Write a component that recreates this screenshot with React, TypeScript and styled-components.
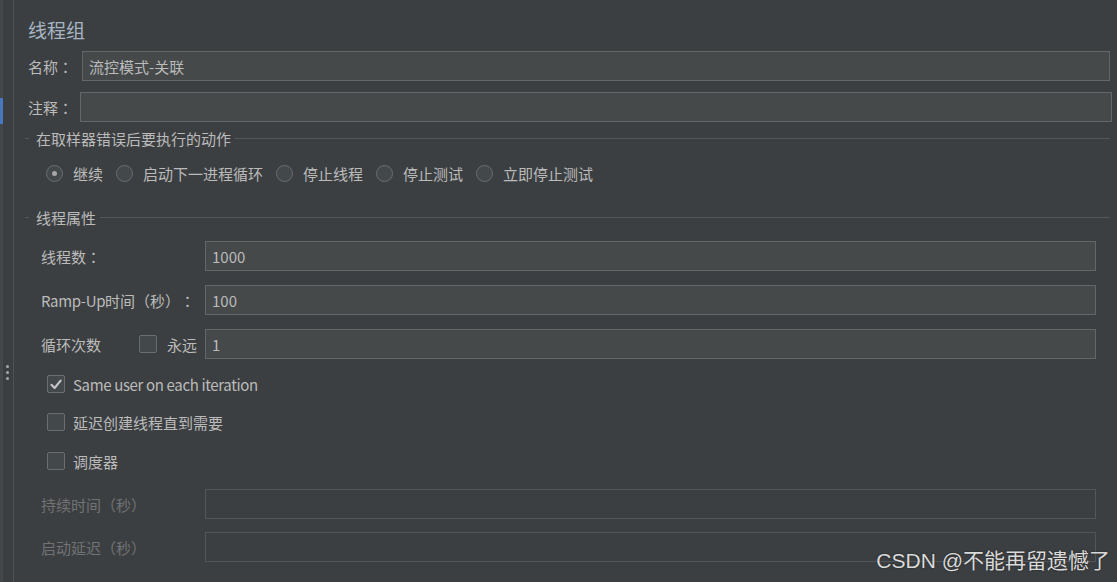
import React from "react"
import styled, { createGlobalStyle } from "styled-components"

const Colors = {
  page: "#3c3f41",
  line: "#555759",
  text: "#bbbbbb",
  title: "#a7b5c4",
  muted: "#707274",
  field: "#45494a",
  fieldBorder: "#646667",
  fieldBorderOff: "#535557",
  control: "#43484a",
  controlBorder: "#6b6e70",
}

const font = `"Noto Sans CJK SC", "Noto Sans", sans-serif`

const GlobalStyle = createGlobalStyle`
  html, body {
    margin: 0;
    padding: 0;
    background: ${Colors.page};
    overflow: hidden;
  }
  * {
    box-sizing: border-box;
  }
`

// full-width colon drawn centred in its cell, like the Swing font does
const Colon = () => <CentredColon>：</CentredColon>

export default function App() {
  return (
    <>
      <GlobalStyle />
      <Page>
        <Splitter>
          <Edge>
            <Marker />
          </Edge>
          <Grip>
            <Dot />
            <Dot />
            <Dot />
          </Grip>
        </Splitter>

        <Content>
          <Title>线程组</Title>

          <TopRow $mt={7} $right={7}>
            <TopLabel $width={54}>名称<Colon /></TopLabel>
            <Field>流控模式-关联</Field>
          </TopRow>

          <TopRow $mt={11} $right={5}>
            <TopLabel $width={52}>注释<Colon /></TopLabel>
            <Field />
          </TopRow>

          <Legend $mt={7}>在取样器错误后要执行的动作</Legend>

          <RadioRow>
            {["继续", "启动下一进程循环", "停止线程", "停止测试", "立即停止测试"].map((label, i) => (
              <Option key={label}>
                <Radio $checked={i === 0} />
                {label}
              </Option>
            ))}
          </RadioRow>

          <Legend $mt={24}>线程属性</Legend>

          <PropRow $mt={15}>
            <PropLabel>线程数<Colon /></PropLabel>
            <Field>1000</Field>
          </PropRow>

          <PropRow $mt={14}>
            <PropLabel><Latin>Ramp-Up</Latin>时间（秒）<Colon /></PropLabel>
            <Field>100</Field>
          </PropRow>

          <PropRow $mt={14}>
            <PropLabel>
              <LoopText>循环次数</LoopText>
              <Option>
                <Checkbox />
                永远
              </Option>
            </PropLabel>
            <Field>1</Field>
          </PropRow>

          <CheckRow $mt={15}>
            <Checkbox $checked>
              <CheckMark />
            </Checkbox>
            <Latin>Same user on each iteration</Latin>
          </CheckRow>

          <CheckRow $mt={18}>
            <Checkbox />
            延迟创建线程直到需要
          </CheckRow>

          <CheckRow $mt={19}>
            <Checkbox />
            调度器
          </CheckRow>

          <PropRow $mt={18}>
            <PropLabel $disabled>持续时间（秒）</PropLabel>
            <Field $disabled />
          </PropRow>

          <PropRow $mt={13}>
            <PropLabel $disabled>启动延迟（秒）</PropLabel>
            <Field $disabled />
          </PropRow>
        </Content>

        <Watermark>CSDN @不能再留遗憾了</Watermark>
      </Page>
    </>
  )
}

const CheckMark = () => (
  <svg width="12" height="11" viewBox="0 0 12 11">
    <path d="M1.5 5.8 L4.6 9 L10.6 1.6" fill="none" stroke="#c4c4c4" strokeWidth="2.2" strokeLinecap="round" strokeLinejoin="round" />
  </svg>
)

const Page = styled.div`
  position: relative;
  display: flex;
  width: 1117px;
  height: 582px;
  background: ${Colors.page};
  font-family: ${font};
  font-size: 15px;
  color: ${Colors.text};
`

const Splitter = styled.div`
  display: flex;
  flex: 0 0 14px;
  border-right: 1px solid #4e5153;
`

const Edge = styled.div`
  width: 3px;
  background: #45484a;
`

const Marker = styled.div`
  margin-top: 98px;
  height: 26px;
  background: #4877bd;
`

const Grip = styled.div`
  flex: 1;
  display: flex;
  flex-direction: column;
  align-items: center;
  gap: 3px;
  padding-top: 365px;
  padding-right: 2px;
`

const Dot = styled.div`
  width: 3px;
  height: 3px;
  border-radius: 50%;
  background: #a8a8a8;
`

const Content = styled.div`
  flex: 1;
  padding: 16px 0 0 14px;
`

const Title = styled.div`
  height: 28px;
  line-height: 28px;
  font-size: 19px;
  color: ${Colors.title};
`

const CentredColon = styled.span`
  font-family: "Noto Sans CJK TC", "Noto Sans CJK SC", sans-serif;
`

const Latin = styled.span`
  letter-spacing: -0.35px;
`

const TopRow = styled.div<{ $mt: number; $right: number }>`
  display: flex;
  align-items: center;
  height: 30px;
  margin-top: ${p => p.$mt}px;
  margin-right: ${p => p.$right}px;
`

const TopLabel = styled.div<{ $width: number }>`
  flex: 0 0 ${p => p.$width}px;
  white-space: nowrap;
`

const Field = styled.div<{ $disabled?: boolean }>`
  flex: 1;
  height: 100%;
  padding: 0 6px;
  display: flex;
  align-items: center;
  background: ${p => (p.$disabled ? "transparent" : Colors.field)};
  border: 1px solid ${p => (p.$disabled ? Colors.fieldBorderOff : Colors.fieldBorder)};
  color: ${Colors.text};
`

const Legend = styled.div<{ $mt: number }>`
  display: flex;
  align-items: center;
  height: 18px;
  margin: ${p => p.$mt}px 7px 0 -3px;
  &::before {
    content: "";
    width: 4px;
    height: 1px;
    margin-right: 7px;
    background: ${Colors.line};
  }
  &::after {
    content: "";
    flex: 1;
    height: 1px;
    margin-left: 4px;
    background: ${Colors.line};
  }
`

const RadioRow = styled.div`
  display: flex;
  align-items: center;
  gap: 13px;
  height: 22px;
  margin: 15px 0 0 18px;
`

const Option = styled.div`
  display: flex;
  align-items: center;
  gap: 10px;
`

const Radio = styled.span<{ $checked?: boolean }>`
  display: flex;
  align-items: center;
  justify-content: center;
  width: 17px;
  height: 17px;
  border-radius: 50%;
  border: 1px solid ${Colors.controlBorder};
  background: ${Colors.control};
  &::after {
    content: "";
    display: ${p => (p.$checked ? "block" : "none")};
    width: 5px;
    height: 5px;
    border-radius: 50%;
    background: #a6a6a6;
  }
`

const PropRow = styled.div<{ $mt: number }>`
  display: flex;
  align-items: center;
  height: 30px;
  margin: ${p => p.$mt}px 21px 0 13px;
`

const PropLabel = styled.div<{ $disabled?: boolean }>`
  flex: 0 0 164px;
  display: flex;
  align-items: center;
  white-space: nowrap;
  color: ${p => (p.$disabled ? Colors.muted : Colors.text)};
`

const LoopText = styled.span`
  width: 98px;
`

const Checkbox = styled.span<{ $checked?: boolean }>`
  display: flex;
  align-items: center;
  justify-content: center;
  width: 18px;
  height: 18px;
  border-radius: 2px;
  border: 1px solid ${Colors.controlBorder};
  background: ${Colors.control};
`

const CheckRow = styled.div<{ $mt: number }>`
  display: flex;
  align-items: center;
  gap: 8px;
  height: 20px;
  margin: ${p => p.$mt}px 0 0 19px;
`

const Watermark = styled.div`
  position: absolute;
  right: 7px;
  bottom: 8px;
  font-family: "Liberation Sans", "Noto Sans CJK SC", sans-serif;
  font-size: 21px;
  color: #dadada;
  text-shadow: 0 0 2px rgba(0, 0, 0, 0.55);
`
